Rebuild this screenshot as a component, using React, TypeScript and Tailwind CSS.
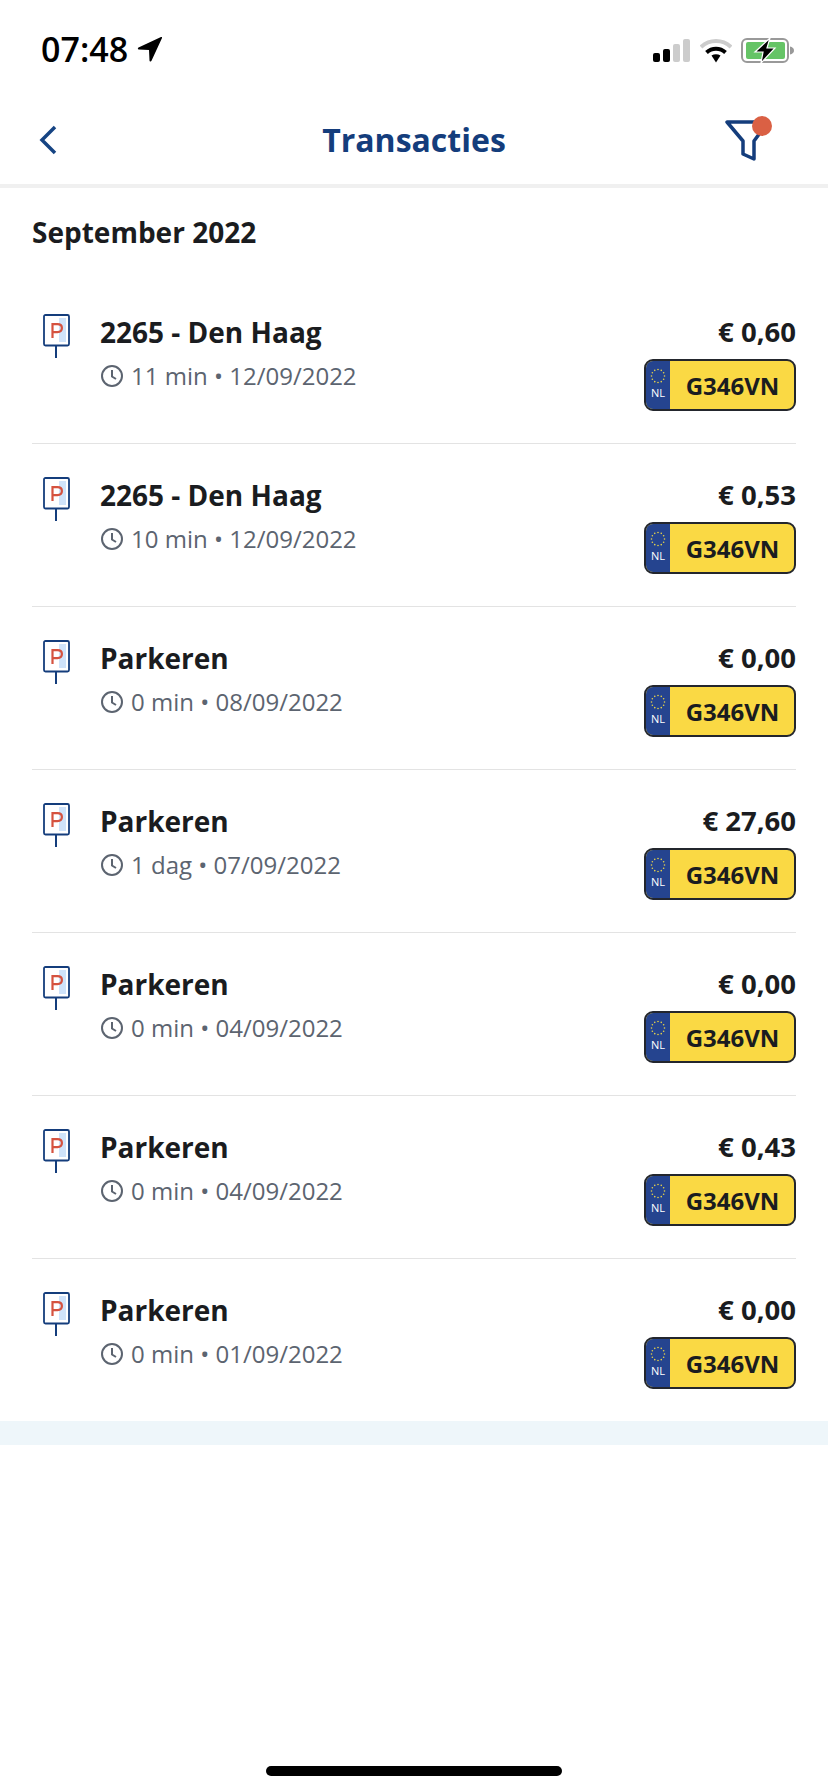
const rows = [
  { title: '2265 - Den Haag', time: '11 min', date: '12/09/2022', price: '€ 0,60' },
  { title: '2265 - Den Haag', time: '10 min', date: '12/09/2022', price: '€ 0,53' },
  { title: 'Parkeren', time: '0 min', date: '08/09/2022', price: '€ 0,00' },
  { title: 'Parkeren', time: '1 dag', date: '07/09/2022', price: '€ 27,60' },
  { title: 'Parkeren', time: '0 min', date: '04/09/2022', price: '€ 0,00' },
  { title: 'Parkeren', time: '0 min', date: '04/09/2022', price: '€ 0,43' },
  { title: 'Parkeren', time: '0 min', date: '01/09/2022', price: '€ 0,00' },
];

function StatusBar() {
  return (
    <div className="flex h-[90px] items-start justify-between pl-[41px] pr-[33px] pt-[28px]">
      <div className="flex items-center gap-[9px]">
        <span className="text-[34px] font-semibold leading-[42px] text-black">07:48</span>
        <svg width="26" height="26" viewBox="0 0 26 26" className="mt-[-1px]">
          <path d="M24 1 1.500 11.500c-1 .5-.8 2 .3 2L12 14l.5 10.500c0 1.200 1.500 1.400 2 .3L25 2c.3-.7-.3-1.300-1-1Z" fill="#000" />
        </svg>
      </div>
      <div className="flex items-center gap-[9px] pt-[9px]">
        <svg width="38" height="24" viewBox="0 0 38 24">
          <rect x="0" y="14" width="7" height="9" rx="2" fill="#000" />
          <rect x="10" y="10" width="7" height="13" rx="2" fill="#000" />
          <rect x="20" y="5" width="7" height="18" rx="2" fill="#ccc" />
          <rect x="30" y="0" width="7" height="23" rx="2" fill="#ccc" />
        </svg>
        <svg width="32" height="25" viewBox="0 0 32 25">
          <path d="M1 9C9.500 1 22.500 1 31 9" fill="none" stroke="#ccc" strokeWidth="4" />
          <path d="M6.500 14.500C12 9.500 20 9.500 25.500 14.500" fill="none" stroke="#000" strokeWidth="4" />
          <path d="M11.500 17.500 16 24.500l4.500-7c-2.800-1.800-6.200-1.800-9 0Z" fill="#000" />
        </svg>
        <svg width="54" height="27" viewBox="0 0 54 27">
          <rect x="1" y="2" width="46" height="23" rx="5" fill="none" stroke="#999" strokeWidth="2" />
          <rect x="5" y="5" width="39" height="17" rx="2" fill="#65c466" />
          <path d="M49 9.500c2.500.5 4 2 4 4s-1.500 3.500-4 4Z" fill="#999" />
          <path d="M29 1 14 15h8l-2 11 14-15h-8l3-10Z" fill="#000" stroke="#fff" strokeWidth="1.200" />
        </svg>
      </div>
    </div>
  );
}

function NavBar() {
  return (
    <div className="grid h-[98px] grid-cols-[1fr_auto_1fr] items-center border-b-4 border-[#f0f0f0] pl-[39px] pr-[55px] pt-[6px]">
      <svg width="18" height="30" viewBox="0 0 18 30">
        <path d="M16 2 3 15l13 13" fill="none" stroke="#164483" strokeWidth="3.500" />
      </svg>
      <h1 className="translate-x-[8px] text-[32px] font-bold leading-[44px] text-[#143d7c]">Transacties</h1>
      <div className="relative h-[42px] w-[48px] justify-self-end">
        <svg width="48" height="42" viewBox="0 0 48 42">
          <path d="M2 3h41L29 22v18l-11-5V22L2 3Z" fill="none" stroke="#143d7c" strokeWidth="3.500" strokeLinejoin="round" />
        </svg>
        <div className="absolute left-[27px] top-[-3px] h-[20px] w-[20px] rounded-full bg-[#da6044]" />
      </div>
    </div>
  );
}

function ParkingSign() {
  return (
    <svg width="28" height="46" viewBox="0 0 28 46" className="shrink-0">
      <rect x="17" y="4" width="7" height="24" fill="#cfe3fa" />
      <rect x="2" y="1" width="25" height="30.500" rx="1.500" fill="none" stroke="#143d7c" strokeWidth="1.800" />
      <path d="M10.500 24V10.200h5c2.600 0 4.400 1.400 4.400 3.900s-1.800 4-4.400 4h-5" fill="none" stroke="#d5523f" strokeWidth="2.200" />
      <path d="M14 32v12" stroke="#143d7c" strokeWidth="2" />
    </svg>
  );
}

function ClockIcon() {
  return (
    <svg width="24" height="24" viewBox="0 0 24 24" className="shrink-0">
      <circle cx="12" cy="12" r="10" fill="none" stroke="#5c6470" strokeWidth="2" />
      <path d="M12 6v6.500l4 2.500" fill="none" stroke="#5c6470" strokeWidth="2" />
    </svg>
  );
}

const stars = Array.from({ length: 12 }, (_, i) => i);

function Plate() {
  return (
    <div className="flex h-[52px] w-[152px] overflow-hidden rounded-[9px] border-2 border-[#23262d] bg-[#fad944]">
      <div className="flex w-[24px] shrink-0 flex-col items-center bg-[#25448f] pt-[7px]">
        <svg width="16" height="16" viewBox="0 0 16 16">
          {stars.map((i) => (
            <circle
              key={i}
              cx={8 + 6.500 * Math.cos((i * Math.PI) / 6)}
              cy={8 + 6.500 * Math.sin((i * Math.PI) / 6)}
              r="0.800"
              fill="#e6d24a"
            />
          ))}
        </svg>
        <span className="mt-[2px] text-[11px] leading-[14px] text-white">NL</span>
      </div>
      <div className="flex flex-1 items-center justify-center pl-[1px] pt-[1px] text-[24px] font-bold leading-none text-[#1a1c20]">
        G346VN
      </div>
    </div>
  );
}

function Row({ title, time, date, price, last }: { title: string; time: string; date: string; price: string; last: boolean }) {
  return (
    <div className="px-[32px]">
      <div className={`flex items-start pt-[33px] ${last ? 'h-[162px]' : 'h-[163px] border-b border-[#e3e3e3]'}`}>
        <div className="ml-[10px] w-[58px]">
          <ParkingSign />
        </div>
        <div className="flex-1">
          <div className="text-[28px] font-bold leading-[36px] text-[#1a1c20]">{title}</div>
          <div className="mt-[8px] flex items-center gap-[7px] text-[24px] leading-[36px] text-[#5c6470]">
            <ClockIcon />
            <span>{time} • {date}</span>
          </div>
        </div>
        <div className="flex flex-col items-end">
          <div className="text-[27.500px] font-bold leading-[36px] text-[#1a1c20]">{price}</div>
          <div className="mt-[9px]">
            <Plate />
          </div>
        </div>
      </div>
    </div>
  );
}

export default function App() {
  return (
    <div className="flex h-[1792px] w-[828px] flex-col overflow-hidden bg-white font-['Open_Sans',sans-serif]">
      <StatusBar />
      <NavBar />
      <div className="h-[93px] px-[32px] pt-[26px] text-[28px] font-bold leading-[36px] text-[#1a1c20]">September 2022</div>
      {rows.map((r, i) => (
        <Row key={i} {...r} last={i === rows.length - 1} />
      ))}
      <div className="h-[24px] bg-[#eef6fa]" />
      <div className="flex flex-1 items-end justify-center pb-[16px]">
        <div className="h-[10px] w-[296px] rounded-full bg-black" />
      </div>
    </div>
  );
}
